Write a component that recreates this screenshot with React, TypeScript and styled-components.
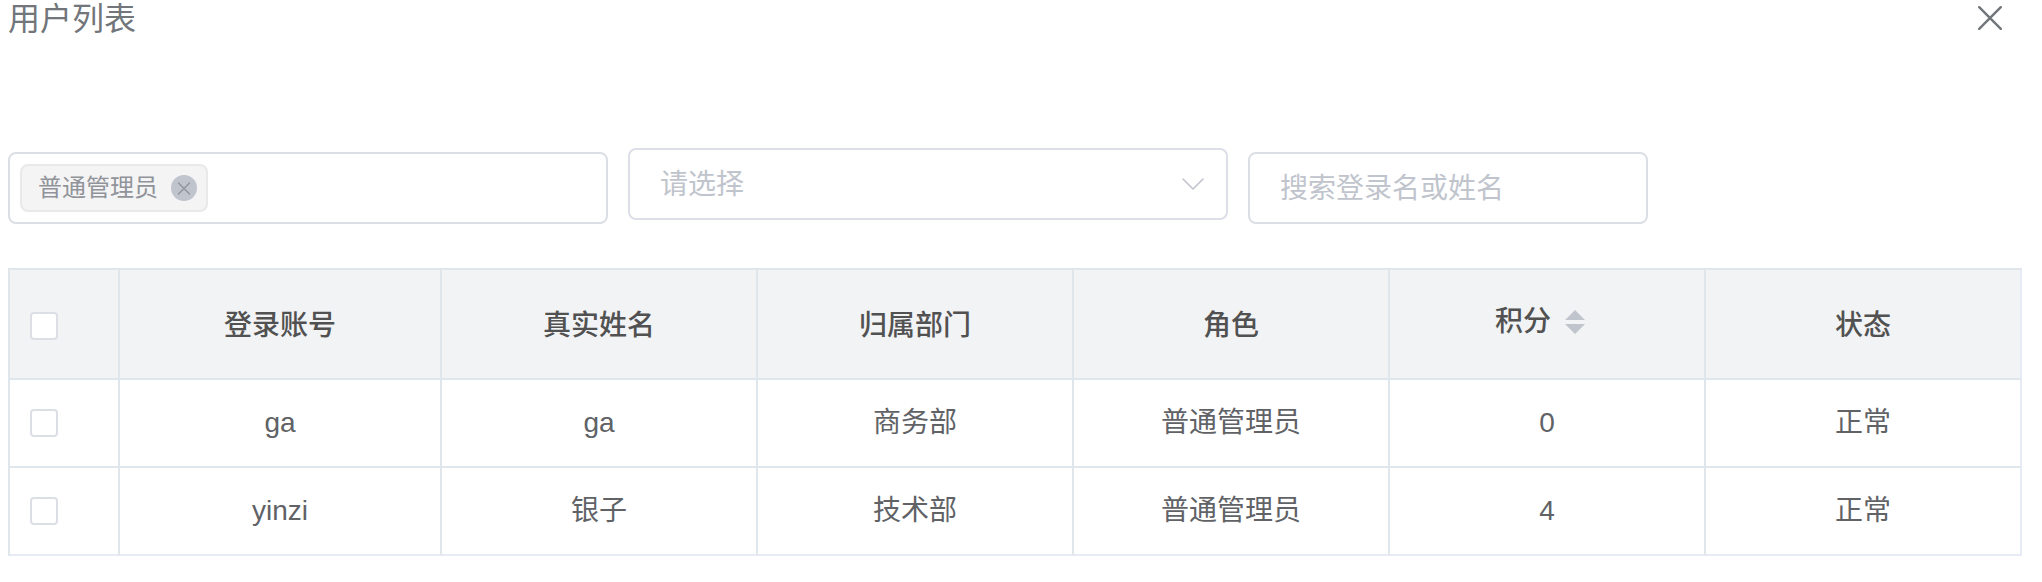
import React, { useState } from 'react';
import styled, { createGlobalStyle } from 'styled-components';

const line = '#dfe6ec';
const edge = '#e6ebf5';
const control = '#dcdfe6';
const muted = '#c0c4cc';

const GlobalStyle = createGlobalStyle`
  *, *::before, *::after { box-sizing: border-box; }
  body {
    margin: 0;
    background: #fff;
    color: #606266;
    font-family: "Liberation Sans", "Noto Sans CJK SC", sans-serif;
    font-size: 28px;
  }
  button, input, select { font: inherit; color: inherit; }
`;

const Page = styled.main`
  padding: 0 20px 0 8px;
`;

const Header = styled.header`
  display: flex;
  justify-content: space-between;
  align-items: center;
  height: 36px;
  padding-right: 20px;
  color: #72767b;
`;

const Title = styled.h1`
  margin: 0;
  padding-top: 2px;
  font-size: 32px;
  font-weight: 400;
  line-height: 36px;
`;

const IconButton = styled.button`
  display: flex;
  padding: 0;
  border: 0;
  background: none;
  color: inherit;
  cursor: pointer;
`;

const Filters = styled.form`
  display: flex;
  align-items: flex-end;
  gap: 20px;
  margin: 112px 0 44px;
`;

const Box = styled.div`
  display: flex;
  align-items: center;
  flex: 0 1 600px;
  min-width: 0;
  height: 72px;
  padding: 0 10px;
  border: 2px solid ${control};
  border-radius: 8px;
`;

const Tag = styled.span`
  display: flex;
  align-items: center;
  flex: none;
  gap: 13px;
  height: 48px;
  padding: 0 9px 0 16px;
  border: 2px solid #e9e9eb;
  border-radius: 8px;
  background: #f4f4f5;
  color: #909399;
  font-size: 24px;
  line-height: 44px;
`;

const BareInput = styled.input`
  flex: 1;
  min-width: 0;
  height: 56px;
  border: 0;
  outline: 0;
  background: none;
`;

const SelectWrap = styled.div`
  display: grid;
  align-items: center;
  flex: 0 1 600px;
  min-width: 0;
  padding-bottom: 4px;

  > * { grid-area: 1 / 1; }
  > svg {
    justify-self: end;
    margin-right: 24px;
    pointer-events: none;
  }
`;

const Select = styled.select`
  width: 100%;
  height: 72px;
  padding: 0 30px;
  border: 2px solid ${control};
  border-radius: 8px;
  appearance: none;
  background: #fff;
  color: ${muted};
`;

const SearchInput = styled.input`
  flex: 0 1 400px;
  min-width: 0;
  height: 72px;
  padding: 2px 30px 0;
  border: 2px solid ${control};
  border-radius: 8px;
  background: #fff;

  &::placeholder { color: ${muted}; opacity: 1; }
`;

const Table = styled.table`
  width: 100%;
  table-layout: fixed;
  border-collapse: separate;
  border-spacing: 0;
  border: 0 solid ${line};
  border-width: 2px 0 0 2px;
`;

const Col = styled.col<{ $width?: number }>`
  width: ${({ $width }) => ($width ? `${$width}px` : 'auto')};
`;

const HeadCell = styled.th<{ $left?: boolean }>`
  height: 110px;
  padding: 4px 20px 0;
  border: 0 solid ${line};
  border-width: 0 2px 2px 0;
  background: #f1f3f5;
  color: #515151;
  font-weight: 500;
  line-height: 40px;
  text-align: ${({ $left }) => ($left ? 'left' : 'center')};

  &:last-child { border-right-color: ${edge}; }
`;

const Cell = styled.td<{ $left?: boolean }>`
  height: 88px;
  padding: 0 20px;
  border: 0 solid ${line};
  border-width: 0 2px 2px 0;
  line-height: 40px;
  text-align: ${({ $left }) => ($left ? 'left' : 'center')};

  &:last-child { border-right-color: ${edge}; }
  tr:last-child > & { border-bottom-color: ${edge}; }
`;

const Checkbox = styled.input`
  display: block;
  width: 28px;
  height: 28px;
  margin: 0;
  border: 2px solid ${control};
  border-radius: 4px;
  appearance: none;
  background: #fff;

  &:checked { background: #409eff; border-color: #409eff; }
`;

const SortButton = styled.button`
  display: inline-flex;
  align-items: center;
  padding: 0 0 8px;
  border: 0;
  background: none;
  line-height: 40px;
  cursor: pointer;

  svg { margin: 0 14px; }
`;

const CloseIcon = () => (
  <svg width="24" height="24" viewBox="0 0 24 24" fill="none" stroke="currentColor" strokeWidth="2.4" strokeLinecap="round" aria-hidden="true">
    <path d="M1.2 1.2 22.8 22.8M22.8 1.2 1.2 22.8" />
  </svg>
);

const TagCloseIcon = () => (
  <svg width="26" height="26" viewBox="0 0 26 26" fill="none" aria-hidden="true">
    <circle cx="13" cy="13" r="13" fill={muted} />
    <path d="M7.5 8 18.5 19M18.5 8 7.5 19" stroke="#909399" strokeWidth="1.3" strokeLinecap="round" />
  </svg>
);

const ChevronIcon = () => (
  <svg width="22" height="12" viewBox="0 0 22 12" fill="none" stroke={muted} strokeWidth="1.6" strokeLinecap="round" strokeLinejoin="round" aria-hidden="true">
    <path d="M1 1 11 11 21 1" />
  </svg>
);

const SortIcon = () => (
  <svg width="20" height="24" viewBox="0 0 20 24" fill={muted} aria-hidden="true">
    <path d="M10 0 20 10H0ZM0 14H20L10 24Z" />
  </svg>
);

const initialUsers = [
  { account: 'ga', name: 'ga', dept: '商务部', role: '普通管理员', points: 0, status: '正常' },
  { account: 'yinzi', name: '银子', dept: '技术部', role: '普通管理员', points: 4, status: '正常' },
];

export default function App() {
  const [roles, setRoles] = useState(['普通管理员']);
  const [picked, setPicked] = useState<string[]>([]);
  const [descending, setDescending] = useState(false);
  const users = descending ? [...initialUsers].reverse() : initialUsers;

  const toggle = (account: string) =>
    setPicked((p) => (p.includes(account) ? p.filter((a) => a !== account) : [...p, account]));

  return (
    <Page>
      <GlobalStyle />
      <Header>
        <Title>用户列表</Title>
        <IconButton type="button" aria-label="关闭"><CloseIcon /></IconButton>
      </Header>

      <Filters onSubmit={(e) => e.preventDefault()}>
        <Box>
          {roles.map((role) => (
            <Tag key={role}>
              {role}
              <IconButton type="button" aria-label={`移除${role}`} onClick={() => setRoles(roles.filter((r) => r !== role))}>
                <TagCloseIcon />
              </IconButton>
            </Tag>
          ))}
          <BareInput type="text" aria-label="角色" />
        </Box>
        <SelectWrap>
          <Select aria-label="归属部门" defaultValue="">
            <option value="">请选择</option>
            <option>商务部</option>
            <option>技术部</option>
          </Select>
          <ChevronIcon />
        </SelectWrap>
        <SearchInput type="text" aria-label="搜索" placeholder="搜索登录名或姓名" />
      </Filters>

      <Table>
        <colgroup>
          <Col $width={110} />
          <Col $width={322} />
          <Col /><Col /><Col /><Col /><Col />
        </colgroup>
        <thead>
          <tr>
            <HeadCell $left scope="col">
              <Checkbox
                type="checkbox"
                aria-label="全选"
                checked={picked.length === users.length}
                onChange={(e) => setPicked(e.target.checked ? users.map((u) => u.account) : [])}
              />
            </HeadCell>
            <HeadCell scope="col">登录账号</HeadCell>
            <HeadCell scope="col">真实姓名</HeadCell>
            <HeadCell scope="col">归属部门</HeadCell>
            <HeadCell scope="col">角色</HeadCell>
            <HeadCell scope="col">
              <SortButton type="button" onClick={() => setDescending(!descending)}>
                积分<SortIcon />
              </SortButton>
            </HeadCell>
            <HeadCell scope="col">状态</HeadCell>
          </tr>
        </thead>
        <tbody>
          {users.map((user) => (
            <tr key={user.account}>
              <Cell $left>
                <Checkbox
                  type="checkbox"
                  aria-label={`选择${user.account}`}
                  checked={picked.includes(user.account)}
                  onChange={() => toggle(user.account)}
                />
              </Cell>
              <Cell>{user.account}</Cell>
              <Cell>{user.name}</Cell>
              <Cell>{user.dept}</Cell>
              <Cell>{user.role}</Cell>
              <Cell>{user.points}</Cell>
              <Cell>{user.status}</Cell>
            </tr>
          ))}
        </tbody>
      </Table>
    </Page>
  );
}
